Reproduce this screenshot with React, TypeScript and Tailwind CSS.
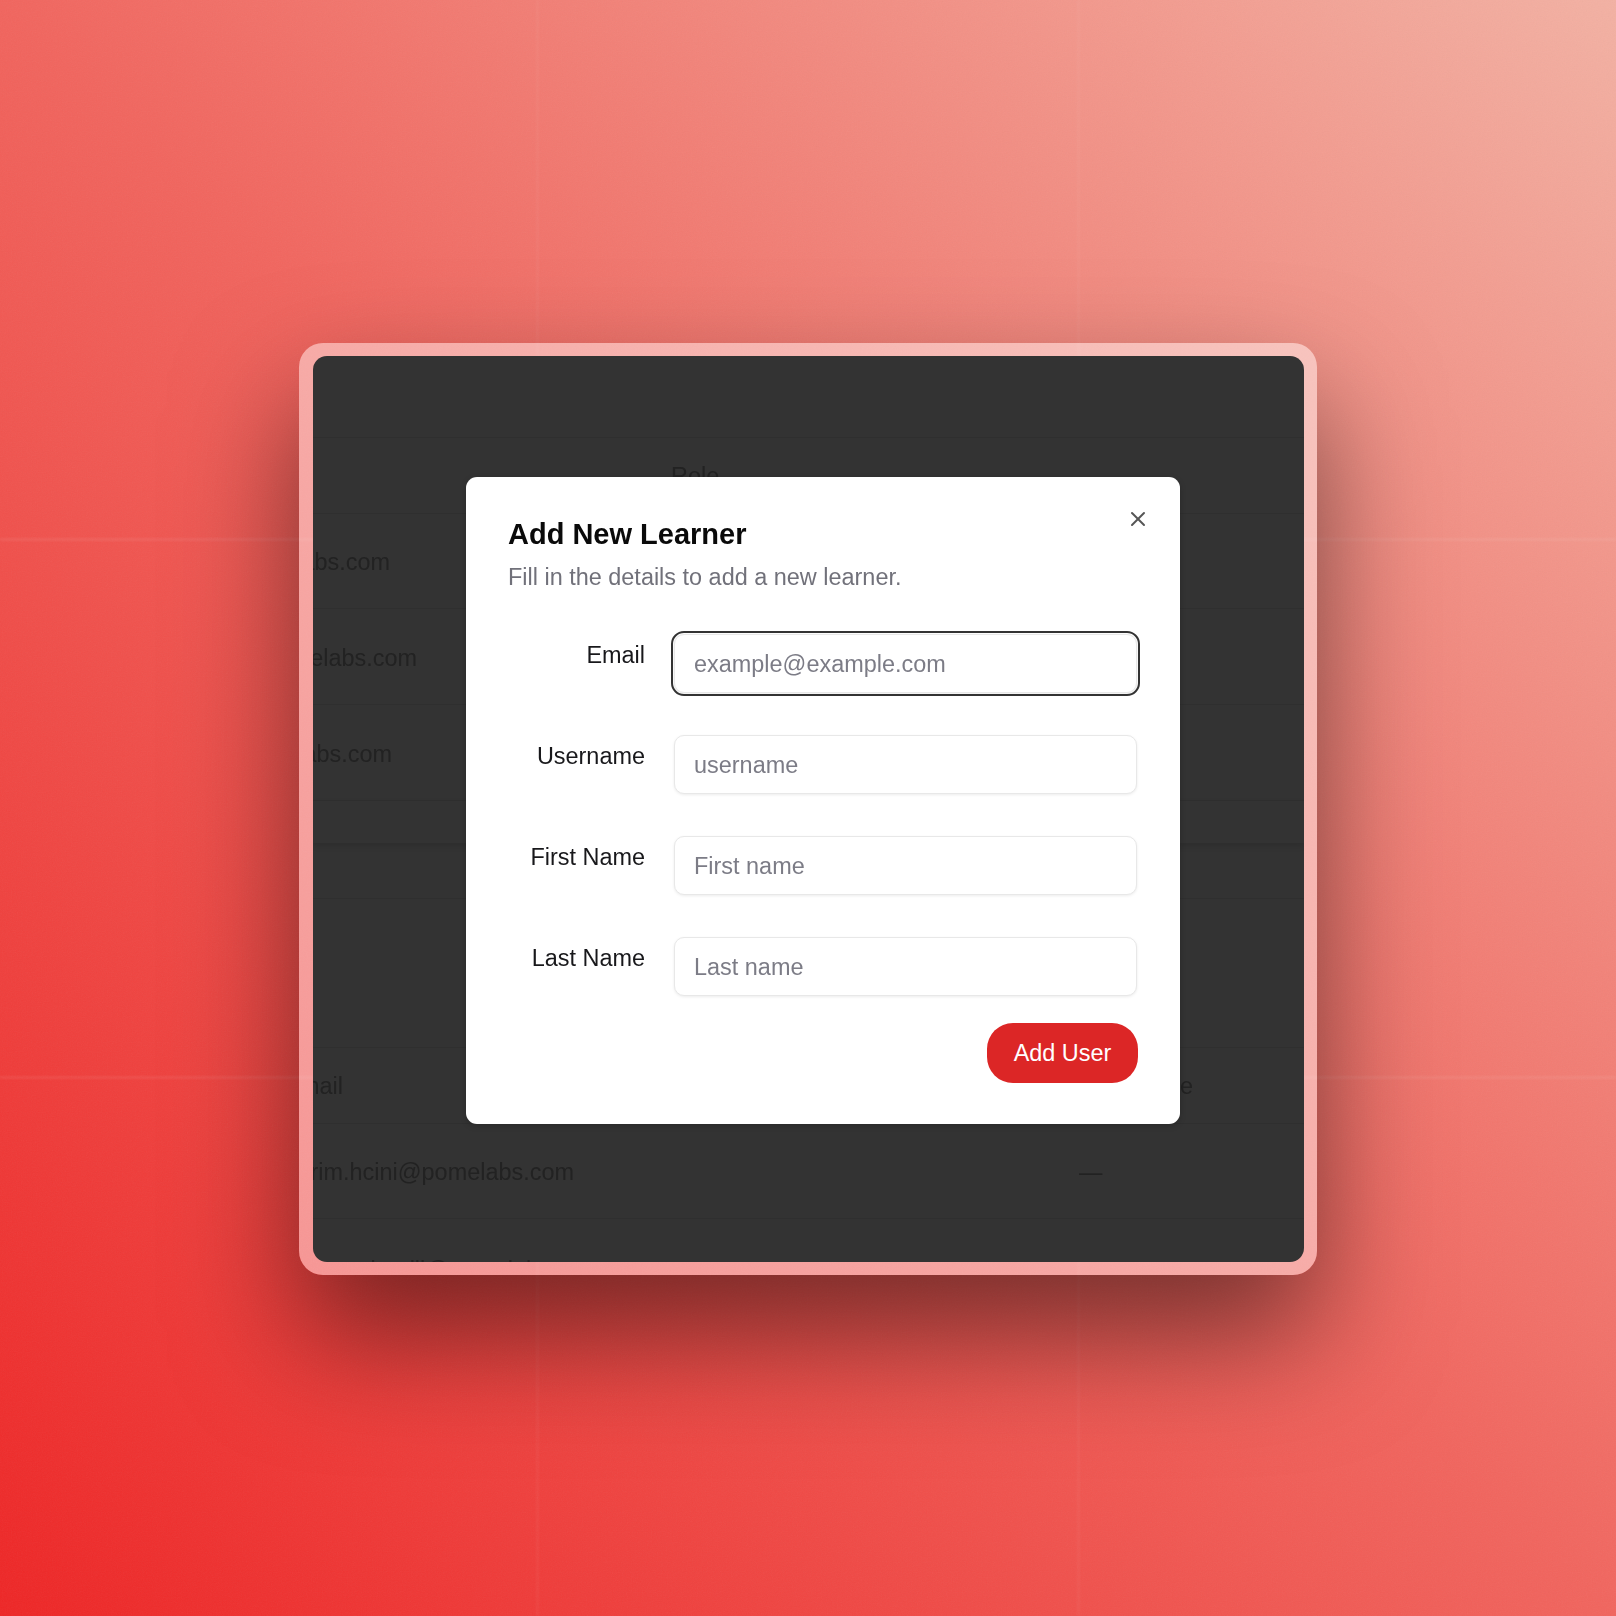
import { X } from "lucide-react"

const fields = [
  { label: "Email", placeholder: "example@example.com", focused: true },
  { label: "Username", placeholder: "username" },
  { label: "First Name", placeholder: "First name" },
  { label: "Last Name", placeholder: "Last name" },
]

function Backdrop() {
  return (
    <div className="text-[23.45px] text-[#222222] blur-[0.6px]">
      <div className="h-[82px] border-b border-[#2f2f2f]" />
      <div className="flex h-[76px] items-center border-b border-[#2f2f2f] pt-[2px] pl-[358px]">Role</div>
      <div className="flex h-[95px] items-center border-b border-[#2f2f2f] pt-[4px]">
        <div className="flex w-[77px] justify-end whitespace-nowrap">sarah.ali@pomelabs.com</div>
      </div>
      <div className="flex h-[96px] items-center border-b border-[#2f2f2f] pt-[4px]">
        <div className="flex w-[104px] justify-end whitespace-nowrap">sarah.ali@pomelabs.com</div>
      </div>
      <div className="flex h-[96px] items-center border-b border-[#2f2f2f] pt-[4px]">
        <div className="flex w-[79px] justify-end whitespace-nowrap">sarah.ali@pomelabs.com</div>
      </div>
      <div className="h-[42px] shadow-[0_3px_6px_rgba(0,0,0,0.12)]" />
      <div className="h-[56px] border-b border-[#2f2f2f]" />
      <div className="h-[149px] border-b border-[#2f2f2f]" />
      <div className="flex h-[76px] items-center border-b border-[#2f2f2f] pt-[2px]">
        <div className="flex w-[30px] justify-end whitespace-nowrap">Email</div>
        <div className="mr-[111px] ml-auto">Role</div>
      </div>
      <div className="flex h-[95px] items-center border-b border-[#2f2f2f] pt-[4px]">
        <div className="flex w-[261px] justify-end whitespace-nowrap">karim.hcini@pomelabs.com</div>
        <div className="ml-[505px]">—</div>
      </div>
      <div className="h-[60px] pt-[34px] pl-[38px] whitespace-nowrap">n.boulil@pomelabs.com</div>
    </div>
  )
}

function AddLearnerModal() {
  return (
    <div className="absolute top-[121px] left-[153px] w-[714px] rounded-[11px] bg-white px-[42px] pt-[43px] pb-[41px] shadow-[0_2px_6px_rgba(0,0,0,0.2)] blur-[0.5px]">
      <button className="absolute top-[30px] right-[30px] text-[#555]">
        <X className="h-[24px] w-[24px]" strokeWidth={2} />
      </button>
      <h2 className="text-[29px] leading-[29px] font-bold text-[#0a0a0a]">Add New Learner</h2>
      <p className="mt-[12px] text-[23.45px] leading-[33px] text-[#71717a]">Fill in the details to add a new learner.</p>

      <div className="mt-[40px] flex flex-col gap-[42px]">
        {fields.map((field) => (
          <div key={field.label} className="flex gap-[29px]">
            <label className="w-[137px] pt-[5px] text-right text-[23.45px] leading-[33px] text-[#18181b]">
              {field.label}
            </label>
            <input
              placeholder={field.placeholder}
              className={`h-[59px] w-[463px] rounded-[10px] border border-[#e8e8e8] bg-white px-[19px] pt-[2px] text-[23.45px] shadow-[0_1px_3px_rgba(0,0,0,0.08)] placeholder:text-[#7c7c86] ${
                field.focused ? "outline-2 outline-offset-1 outline-[#333]" : "outline-none"
              }`}
            />
          </div>
        ))}
      </div>

      <div className="mt-[27px] flex justify-end">
        <button className="h-[60px] w-[151px] rounded-[26px] bg-[#dc2626] pt-[2px] text-[23.45px] font-medium text-white">
          Add User
        </button>
      </div>
    </div>
  )
}

export default function App() {
  return (
    <div className="relative flex h-[1616px] w-[1616px] items-center justify-center overflow-hidden bg-[linear-gradient(to_top_right,#ee2626,#f1655e_50%,#f3b1a3)] font-['Liberation_Sans',sans-serif]">
      {/* faint grid lines in the backdrop */}
      <div className="absolute top-0 bottom-0 left-[536px] w-[3px] bg-white/[0.04] blur-[1px]" />
      <div className="absolute top-0 bottom-0 left-[1077px] w-[3px] bg-white/[0.04] blur-[1px]" />
      <div className="absolute top-[538px] right-0 left-0 h-[3px] bg-white/[0.07] blur-[1px]" />
      <div className="absolute top-[1076px] right-0 left-0 h-[3px] bg-white/[0.07] blur-[1px]" />
      <svg className="absolute inset-0 h-full w-full opacity-[0.06]">
        <filter id="grain">
          <feTurbulence type="fractalNoise" baseFrequency="0.8" numOctaves="2" />
          <feColorMatrix type="saturate" values="0" />
        </filter>
        <rect width="100%" height="100%" filter="url(#grain)" />
      </svg>

      <div className="relative mt-[2px] h-[932px] w-[1018px] rounded-[24px] bg-white/45 p-[13px] pl-[14px] shadow-[0_60px_120px_rgba(0,0,0,0.5)]">
        <div className="relative h-full w-full overflow-hidden rounded-[14px] bg-[#333333]">
          <Backdrop />
          <AddLearnerModal />
        </div>
      </div>
    </div>
  )
}
